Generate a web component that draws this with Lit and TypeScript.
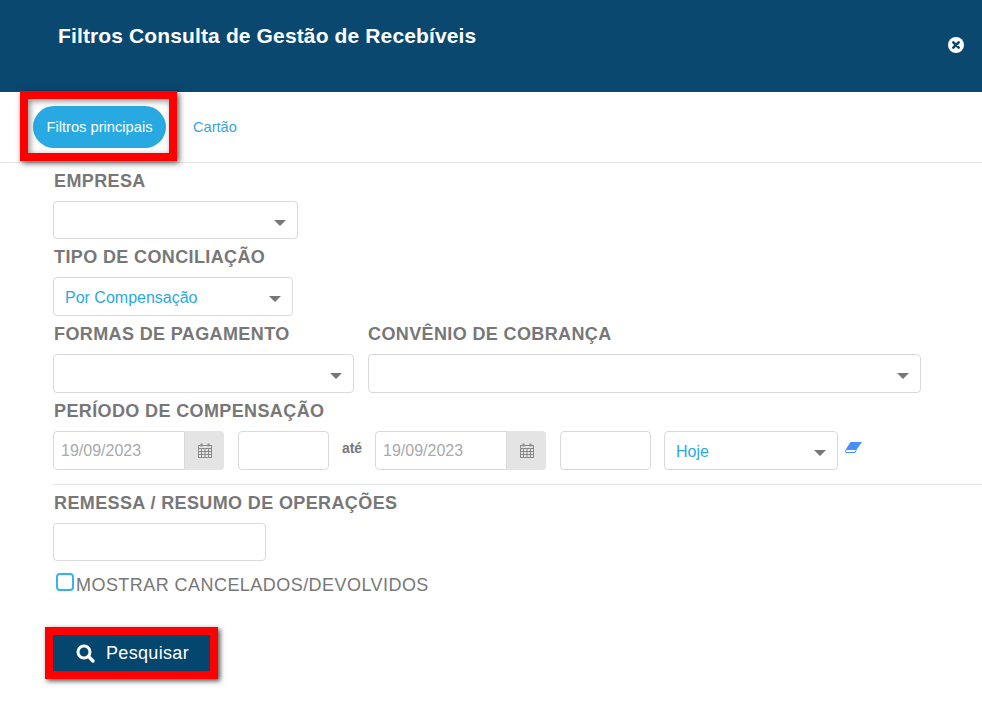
import { LitElement, html, css } from "lit";
import { customElement } from "lit/decorators.js";

const caret = html`<svg class="caret" width="12" height="6" viewBox="0 0 12 6"><path d="M0 0H12L6 6Z" fill="#777"/></svg>`;
const calendar = html`<svg width="14" height="15" viewBox="0 0 14 15" fill="none" stroke="#8a8a8a" stroke-width="1">
  <rect x="0.5" y="2.5" width="13" height="12"/>
  <path d="M0.5 5.5H13.5M0.5 8.5H13.5M0.5 11.5H13.5M3.5 5.5V14.5M7 5.5V14.5M10.5 5.5V14.5"/>
  <path d="M3.5 0.5V3.5M10.5 0.5V3.5" stroke-width="2"/>
</svg>`;

@customElement("app-root")
export class AppRoot extends LitElement {
  static styles = css`
    :host { display: block; width: 982px; height: 714px; background: #fff; position: relative; overflow: hidden; font-family: "Liberation Sans", Arial, sans-serif; }
    .head { height: 92px; background: #0a4870; box-sizing: border-box; padding: 23px 0 0 58px; display: flex; justify-content: space-between; }
    .head h1 { margin: 0; color: #fff; font-size: 21px; line-height: 25px; font-weight: 700; letter-spacing: 0.13px; }
    .close { margin: 14px 18px 0 0; }
    .tabs { height: 71px; box-sizing: border-box; padding: 14px 0 0 33px; display: flex; gap: 27px; border-bottom: 1px solid #e4e4e4; }
    .pill { width: 133px; height: 42px; border-radius: 21px; background: #29a9e1; color: #fff; font-size: 14.7px; display: flex; align-items: center; justify-content: center; }
    .tab { font-size: 14.6px; line-height: 42px; color: #35a4e0; }
    .mark { position: absolute; left: 20px; top: 91px; width: 157px; height: 70px; box-sizing: border-box; border: 8px solid #f00; box-shadow: 2px 2px 6px rgba(0,0,0,.65), inset 2px 2px 6px rgba(0,0,0,.45); }
    .form { padding-left: 53px; }
    .label { height: 38px; line-height: 37px; font-size: 18px; font-weight: 700; color: #777; margin-left: 1px; white-space: nowrap; letter-spacing: 0.38px; }
    .label.flush { margin-left: 0; }
    .box { box-sizing: border-box; border: 1px solid #d9d9d9; border-radius: 4px; background: #fff; display: flex; align-items: center; justify-content: space-between; font-size: 16px; color: #29a9e1; }
    .select { padding: 0 11px; }
    .select span { margin-top: 2px; }
    .caret { margin-top: 5px; flex: none; }
    .h38 { height: 38px; } .h39 { height: 39px; }
    .w245 { width: 245px; } .w240 { width: 240px; } .w301 { width: 301px; } .w553 { width: 553px; } .w213 { width: 213px; }
    .row { display: flex; }
    .gap14 { gap: 14px; }
    .date { width: 132px; height: 39px; border-radius: 4px 0 0 4px; padding-left: 7px; color: #a9a9a9; justify-content: flex-start; }
    .addon { width: 39px; height: 39px; background: #e4e4e4; border-radius: 0 4px 4px 0; display: flex; align-items: center; justify-content: center; }
    .time { width: 91px; height: 39px; margin-left: 14px; }
    .ate { width: 46px; font-size: 14px; font-weight: 700; color: #777; text-align: center; line-height: 35px; }
    .hoje { width: 174px; height: 39px; margin-left: 13px; }
    .eraser { margin: 11px 0 0 7px; }
    hr { margin: 14px 0 0 0; height: 1px; border: 0; background: #e4e4e4; }
    .check { display: flex; margin: 12px 0 0 3px; height: 36px; font-size: 18px; color: #777; line-height: 24px; letter-spacing: 0.45px; }
    .check i { display: block; box-sizing: border-box; width: 18px; height: 18px; border: 2px solid #3cb0e8; border-radius: 4px; margin-right: 2px; }
    .btn { margin: 18px 0 0 -8px; width: 173px; height: 52px; box-sizing: border-box; border: 8px solid #f00; background: #05466f; color: #fff; font-size: 18px; letter-spacing: 0.33px; display: flex; align-items: center; gap: 11px; padding-left: 23px; box-shadow: 2px 2px 5px rgba(0,0,0,.7); }
  `;

  render() {
    return html`
      <div class="head">
        <h1>Filtros Consulta de Gestão de Recebíveis</h1>
        <svg class="close" width="16" height="16" viewBox="0 0 16 16"><circle cx="8" cy="8" r="8" fill="#fff"/><path d="M5.3 5.3L10.7 10.7M10.7 5.3L5.3 10.7" stroke="#0a4870" stroke-width="2.6" stroke-linecap="round"/></svg>
      </div>
      <div class="tabs">
        <div class="pill">Filtros principais</div>
        <div class="tab">Cartão</div>
      </div>
      <div class="mark"></div>
      <div class="form">
        <div class="label">EMPRESA</div>
        <div class="box select h38 w245"><span></span>${caret}</div>
        <div class="label">TIPO DE CONCILIAÇÃO</div>
        <div class="box select h39 w240"><span>Por Compensação</span>${caret}</div>
        <div class="row gap14">
          <div>
            <div class="label">FORMAS DE PAGAMENTO</div>
            <div class="box select h39 w301"><span></span>${caret}</div>
          </div>
          <div>
            <div class="label flush">CONVÊNIO DE COBRANÇA</div>
            <div class="box select h39 w553"><span></span>${caret}</div>
          </div>
        </div>
        <div class="label">PERÍODO DE COMPENSAÇÃO</div>
        <div class="row">
          <div class="box date">19/09/2023</div>
          <div class="addon">${calendar}</div>
          <div class="box time"></div>
          <div class="ate">até</div>
          <div class="box date">19/09/2023</div>
          <div class="addon">${calendar}</div>
          <div class="box time"></div>
          <div class="box select hoje"><span>Hoje</span>${caret}</div>
          <svg class="eraser" width="17" height="12" viewBox="0 0 17 12">
            <path d="M5.5 0H17L12 7H1Z" fill="#4a90fa"/>
            <path d="M1 7.5H11.5L10 10.5H1L0.5 9Z" fill="#fff" stroke="#4a90fa" stroke-width="1"/>
          </svg>
        </div>
        <hr />
        <div class="label">REMESSA / RESUMO DE OPERAÇÕES</div>
        <div class="box h38 w213"></div>
        <div class="check"><i></i><span>MOSTRAR CANCELADOS/DEVOLVIDOS</span></div>
        <div class="btn">
          <svg width="19" height="19" viewBox="0 0 19 19" fill="none" stroke="#fff"><circle cx="8" cy="8" r="6" stroke-width="3"/><path d="M12.5 12.5L17 17" stroke-width="3.4" stroke-linecap="round"/></svg>
          <span>Pesquisar</span>
        </div>
      </div>
    `;
  }
}
